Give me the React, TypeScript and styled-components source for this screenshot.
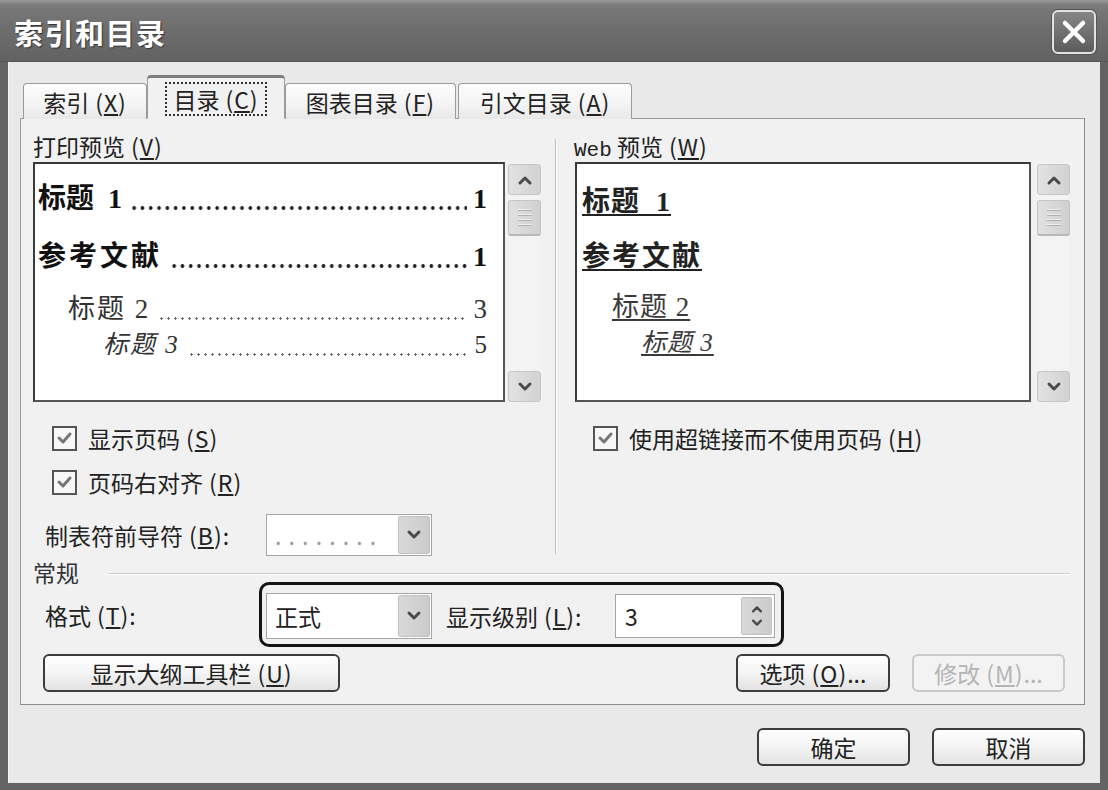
import React from 'react';
import styled, { createGlobalStyle } from 'styled-components';

const UI_FONT = `"Noto Sans CJK SC", "Noto Sans", sans-serif`;
const PREVIEW_FONT = `"Liberation Serif", "Noto Sans CJK SC", serif`;

const GlobalStyle = createGlobalStyle`
  html, body {
    margin: 0;
    padding: 0;
    background: #5f5f5f;
  }
  body {
    font-family: ${UI_FONT};
    color: #222;
  }
  * {
    box-sizing: border-box;
  }
`;

// accelerator key, shown as " (X)" with the letter underlined
const Key = ({ k }: { k: string }) => (
  <KeyWrap>
    (<u>{k}</u>)
  </KeyWrap>
);

const Chevron = ({ down = false, size = 18 }: { down?: boolean; size?: number }) => (
  <svg width={size} height={size} viewBox="0 0 18 18">
    <polyline
      points={down ? '4,6 9,11 14,6' : '4,12 9,7 14,12'}
      fill="none"
      stroke="#4a4a4a"
      strokeWidth={3}
      strokeLinecap="round"
      strokeLinejoin="round"
    />
  </svg>
);

const ScrollBar = () => (
  <Scroll>
    <ScrollButton>
      <Chevron />
    </ScrollButton>
    <Thumb>
      <Grip />
      <Grip />
      <Grip />
      <Grip />
    </Thumb>
    <ScrollTrack />
    <ScrollButton>
      <Chevron down />
    </ScrollButton>
  </Scroll>
);

const CheckBox = () => (
  <Box>
    <svg width="17" height="17" viewBox="0 0 17 17">
      <polyline
        points="3,8 7,12 14,4"
        fill="none"
        stroke="#777"
        strokeWidth={3}
        strokeLinecap="round"
        strokeLinejoin="round"
      />
    </svg>
  </Box>
);

const App: React.FC = () => {
  return (
    <>
      <GlobalStyle />
      <Window>
        <TitleBar>
          <Title>索引和目录</Title>
          <CloseButton>
            <svg width="26" height="26" viewBox="0 0 26 26">
              <path d="M4 4 L22 22 M22 4 L4 22" stroke="#fff" strokeWidth={4.5} strokeLinecap="round" />
            </svg>
          </CloseButton>
        </TitleBar>

        <Body>
          <TabRow>
            <Tab $width={124}>
              索引<Key k="X" />
            </Tab>
            <Tab $width={138} $active>
              <Focus>
                目录<Key k="C" />
              </Focus>
            </Tab>
            <Tab $width={171}>
              图表目录<Key k="F" />
            </Tab>
            <Tab $width={174}>
              引文目录<Key k="A" />
            </Tab>
          </TabRow>

          <Panel>
            <TopSection>
              <LeftCol>
                <SectionLabel>
                  打印预览<Key k="V" />
                </SectionLabel>
                <PreviewRow>
                  <PreviewBox>
                    <TocRow $height={42} $indent={0} $gap={0}>
                      <TocText $size={28} $bold>
                        标题  1
                      </TocText>
                      <Leader $bold $lift={10} />
                      <TocText $size={28} $bold>
                        1
                      </TocText>
                    </TocRow>
                    <TocRow $height={42} $indent={0} $gap={16}>
                      <TocText $size={28} $bold $spacing={3}>
                        参考文献
                      </TocText>
                      <Leader $bold $lift={10} />
                      <TocText $size={28} $bold>
                        1
                      </TocText>
                    </TocRow>
                    <TocRow $height={38} $indent={30} $gap={13}>
                      <TocText $size={27} $spacing={2}>
                        标题 2
                      </TocText>
                      <Leader $lift={9} />
                      <TocText $size={27}>3</TocText>
                    </TocRow>
                    <TocRow $height={30} $indent={65} $gap={4}>
                      <TocText $size={25} $italic $spacing={2}>
                        标题 3
                      </TocText>
                      <Leader $lift={7} />
                      <TocText $size={25}>5</TocText>
                    </TocRow>
                  </PreviewBox>
                  <ScrollBar />
                </PreviewRow>

                <CheckRow $top={22}>
                  <CheckBox />
                  <span>
                    显示页码<Key k="S" />
                  </span>
                </CheckRow>
                <CheckRow $top={16}>
                  <CheckBox />
                  <span>
                    页码右对齐<Key k="R" />
                  </span>
                </CheckRow>
                <LeaderRow>
                  <FieldLabel $width={221}>
                    制表符前导符<Key k="B" />:
                  </FieldLabel>
                  <Select $height={42}>
                    <SelectValue $muted>. . . . . . . .</SelectValue>
                    <DropButton>
                      <Chevron down />
                    </DropButton>
                  </Select>
                </LeaderRow>
              </LeftCol>

              <Separator />

              <RightCol>
                <SectionLabel>
                  <Mono>Web</Mono> 预览<Key k="W" />
                </SectionLabel>
                <PreviewRow $wide>
                  <PreviewBox>
                    <WebRow $height={42} $indent={2} $gap={0}>
                      <WebLink $size={28} $bold $spacing={1}>
                        标题  1
                      </WebLink>
                    </WebRow>
                    <WebRow $height={42} $indent={2} $gap={13}>
                      <WebLink $size={28} $bold $spacing={2}>
                        参考文献
                      </WebLink>
                    </WebRow>
                    <WebRow $height={36} $indent={32} $gap={11}>
                      <WebLink $size={27} $spacing={1}>
                        标题 2
                      </WebLink>
                    </WebRow>
                    <WebRow $height={30} $indent={61} $gap={3}>
                      <WebLink $size={25} $italic $spacing={1}>
                        标题 3
                      </WebLink>
                    </WebRow>
                  </PreviewBox>
                  <ScrollBar />
                </PreviewRow>

                <CheckRow $top={22}>
                  <CheckBox />
                  <span>
                    使用超链接而不使用页码<Key k="H" />
                  </span>
                </CheckRow>
              </RightCol>
            </TopSection>

            <GroupHeader>
              <span>常规</span>
              <GroupLine />
            </GroupHeader>

            <FormatRow>
              <FieldLabel $width={214}>
                格式<Key k="T" />:
              </FieldLabel>
              <Highlight>
                <Select $height={46}>
                  <SelectValue>正式</SelectValue>
                  <DropButton>
                    <Chevron down />
                  </DropButton>
                </Select>
                <LevelLabel>
                  显示级别<Key k="L" />:
                </LevelLabel>
                <Spin>
                  <SelectValue>3</SelectValue>
                  <SpinButtons>
                    <Chevron size={14} />
                    <Chevron size={14} down />
                  </SpinButtons>
                </Spin>
              </Highlight>
            </FormatRow>

            <ButtonRow>
              <Button $width={297}>
                显示大纲工具栏<Key k="U" />
              </Button>
              <RightButtons>
                <Button $width={154}>
                  选项<Key k="O" />...
                </Button>
                <Button $width={153} disabled>
                  修改<Key k="M" />...
                </Button>
              </RightButtons>
            </ButtonRow>
          </Panel>

          <DialogButtons>
            <Button $width={153}>确定</Button>
            <Button $width={153}>取消</Button>
          </DialogButtons>
        </Body>
      </Window>
    </>
  );
};

const Window = styled.div`
  width: 1108px;
  height: 790px;
  background: #636363;
  display: flex;
  flex-direction: column;
  overflow: hidden;
`;

const TitleBar = styled.div`
  height: 62px;
  flex-shrink: 0;
  display: flex;
  align-items: center;
  justify-content: space-between;
  padding: 2px 12px 0 14px;
  background: linear-gradient(180deg, #9a9a9a 0, #7a7a7a 5px, #6e6e6e 45%, #626262 100%);
  border-bottom: 1px solid #555;
`;

const Title = styled.div`
  font-family: ${UI_FONT};
  font-size: 29px;
  font-weight: 700;
  color: #fff;
  letter-spacing: 1.5px;
  text-shadow: 1px 1px 1px #333;
`;

const CloseButton = styled.div`
  width: 44px;
  height: 44px;
  border: 2px solid #e2e2e2;
  border-radius: 6px;
  background: linear-gradient(180deg, #868686, #5c5c5c);
  display: flex;
  align-items: center;
  justify-content: center;
  box-shadow: 0 0 0 1px #555;
`;

const Body = styled.div`
  flex: 1;
  margin: 0 8px 7px 8px;
  background: #e9e9e9;
  border-left: 1px solid #f5f5f5;
  padding: 14px 15px 16px 11px;
  display: flex;
  flex-direction: column;
`;

const KeyWrap = styled.span`
  margin-left: 6px;
  letter-spacing: 1px;

  u {
    text-underline-offset: 2px;
  }
`;

const Mono = styled.span`
  font-family: "Liberation Mono", monospace;
  font-size: 21px;
`;

const TabRow = styled.div`
  display: flex;
  align-items: flex-end;
  height: 43px;
  padding-left: 2px;
  margin-bottom: -1px;
  position: relative;
  z-index: 1;
`;

const Tab = styled.div<{ $width: number; $active?: boolean }>`
  width: ${({ $width }) => $width}px;
  height: ${({ $active }) => ($active ? 44 : 36)}px;
  margin: 0 ${({ $active }) => ($active ? '-1px' : '1px')};
  display: flex;
  align-items: center;
  justify-content: center;
  font-size: 23px;
  color: #222;
  white-space: nowrap;
  border: 1px solid #9b9b9b;
  border-top: ${({ $active }) => ($active ? '3px solid #7d7d7d' : '1px solid #9b9b9b')};
  border-bottom: ${({ $active }) => ($active ? '1px solid #f1f1f1' : 'none')};
  border-radius: 4px 4px 0 0;
  background: ${({ $active }) =>
    $active ? '#f1f1f1' : 'linear-gradient(180deg, #fdfdfd 0, #f3f3f3 60%, #e8e8e8 100%)'};
  padding-top: ${({ $active }) => ($active ? '2px' : '0')};
`;

const Focus = styled.span`
  border: 2px dotted #333;
  padding: 0 6px;
  line-height: 30px;
`;

const Panel = styled.div`
  height: 587px;
  background: #f1f1f1;
  border: 1px solid #9b9b9b;
  border-right-color: #8a8a8a;
  border-bottom-color: #8a8a8a;
  padding: 12px 14px 12px 12px;
  display: flex;
  flex-direction: column;
  font-size: 23px;
`;

const TopSection = styled.div`
  display: flex;
  height: 425px;
`;

const LeftCol = styled.div`
  width: 508px;
  display: flex;
  flex-direction: column;
`;

const RightCol = styled.div`
  flex: 1;
  margin-left: 17px;
  display: flex;
  flex-direction: column;
`;

const Separator = styled.div`
  width: 2px;
  margin: 8px 0 2px 14px;
  border-left: 1px solid #bcbcbc;
  border-right: 1px solid #fff;
`;

const SectionLabel = styled.div`
  height: 30px;
  line-height: 30px;
  font-size: 23px;
  color: #222;
  white-space: nowrap;
`;

const PreviewRow = styled.div<{ $wide?: boolean }>`
  margin-top: 1px;
  height: 240px;
  display: flex;
  gap: ${({ $wide }) => ($wide ? 6 : 3)}px;
  padding-left: ${({ $wide }) => ($wide ? 1 : 0)}px;
`;

const PreviewBox = styled.div`
  flex: 1;
  background: #fff;
  border: 2px solid #3a3a3a;
  border-right-color: #555;
  border-bottom-color: #555;
  padding: 14px 16px 0 3px;
  display: flex;
  flex-direction: column;
  overflow: hidden;
`;

const TocRow = styled.div<{ $height: number; $indent: number; $gap: number }>`
  display: flex;
  align-items: flex-end;
  height: ${({ $height }) => $height}px;
  margin-top: ${({ $gap }) => $gap}px;
  padding-left: ${({ $indent }) => $indent}px;
`;

const TocText = styled.span<{ $size: number; $bold?: boolean; $italic?: boolean; $spacing?: number }>`
  font-family: ${PREVIEW_FONT};
  font-size: ${({ $size }) => $size}px;
  font-weight: ${({ $bold }) => ($bold ? 700 : 400)};
  font-style: ${({ $italic }) => ($italic ? 'italic' : 'normal')};
  letter-spacing: ${({ $spacing = 0 }) => $spacing}px;
  color: ${({ $bold }) => ($bold ? '#111' : '#333')};
  white-space: pre;
  line-height: 1.5;
`;

const Leader = styled.span<{ $bold?: boolean; $lift: number }>`
  flex: 1;
  height: ${({ $bold }) => ($bold ? 4 : 3)}px;
  margin: 0 6px ${({ $lift }) => $lift}px 8px;
  background-image: radial-gradient(
    circle,
    ${({ $bold }) => ($bold ? '#222 1.6px, transparent 2.1px' : '#555 0.9px, transparent 1.4px')}
  );
  background-size: ${({ $bold }) => ($bold ? '8.3px 4px' : '7px 3px')};
  background-repeat: repeat-x;
`;

const WebRow = styled.div<{ $height: number; $indent: number; $gap: number }>`
  display: flex;
  align-items: center;
  height: ${({ $height }) => $height}px;
  margin-top: ${({ $gap }) => $gap}px;
  padding-left: ${({ $indent }) => $indent}px;
`;

const WebLink = styled.span<{ $size: number; $bold?: boolean; $italic?: boolean; $spacing?: number }>`
  font-family: ${PREVIEW_FONT};
  font-size: ${({ $size }) => $size}px;
  font-weight: ${({ $bold }) => ($bold ? 700 : 400)};
  font-style: ${({ $italic }) => ($italic ? 'italic' : 'normal')};
  letter-spacing: ${({ $spacing = 0 }) => $spacing}px;
  color: ${({ $bold }) => ($bold ? '#222' : '#3a3a3a')};
  text-decoration: underline;
  text-decoration-thickness: 2px;
  text-underline-offset: 3px;
  white-space: pre;
`;

const Scroll = styled.div`
  width: 33px;
  display: flex;
  flex-direction: column;
  padding-top: 2px;
  background: #f3f3f3;
`;

const ScrollButton = styled.div`
  height: 31px;
  display: flex;
  align-items: center;
  justify-content: center;
  background: linear-gradient(90deg, #e2e2e2, #d2d2d2);
  border: 1px solid #c6c6c6;
  border-radius: 3px;
`;

const Thumb = styled.div`
  height: 36px;
  margin-top: 5px;
  background: linear-gradient(90deg, #e0e0e0, #d0d0d0);
  border: 1px solid #c4c4c4;
  border-bottom: 2px solid #b8b8b8;
  border-radius: 3px;
  display: flex;
  flex-direction: column;
  align-items: center;
  justify-content: center;
  gap: 3px;
`;

const Grip = styled.div`
  width: 14px;
  height: 2px;
  background: #eee;
  border-bottom: 1px solid #b0b0b0;
`;

const ScrollTrack = styled.div`
  flex: 1;
`;

const CheckRow = styled.div<{ $top: number }>`
  display: flex;
  align-items: center;
  gap: 11px;
  height: 28px;
  margin-top: ${({ $top }) => $top}px;
  padding-left: 19px;
  font-size: 23px;
  color: #222;
  white-space: nowrap;
`;

const Box = styled.div`
  width: 25px;
  height: 25px;
  border: 2px solid #555;
  background: #f7f7f7;
  display: flex;
  align-items: center;
  justify-content: center;
`;

const LeaderRow = styled.div`
  display: flex;
  align-items: center;
  margin-top: 18px;
  padding-left: 12px;
`;

const FieldLabel = styled.div<{ $width: number }>`
  width: ${({ $width }) => $width}px;
  font-size: 23px;
  color: #222;
  white-space: nowrap;
`;

const Select = styled.div<{ $height: number }>`
  width: 166px;
  height: ${({ $height }) => $height}px;
  display: flex;
  align-items: stretch;
  background: #fff;
  border: 1px solid #a4a4a4;
  padding: 1px;
`;

const SelectValue = styled.div<{ $muted?: boolean }>`
  flex: 1;
  display: flex;
  align-items: center;
  padding-left: 7px;
  font-size: 23px;
  color: ${({ $muted }) => ($muted ? '#9a9a9a' : '#222')};
  letter-spacing: ${({ $muted }) => ($muted ? '1px' : '0')};
`;

const DropButton = styled.div`
  width: 32px;
  display: flex;
  align-items: center;
  justify-content: center;
  background: linear-gradient(90deg, #d9d9d9, #cbcbcb);
  border: 1px solid #c2c2c2;
  border-radius: 2px;
`;

const GroupHeader = styled.div`
  display: flex;
  align-items: center;
  height: 20px;
  margin-top: 6px;
  line-height: 20px;
  font-size: 23px;
  color: #333;
`;

const GroupLine = styled.div`
  flex: 1;
  height: 2px;
  margin: 4px 0 0 30px;
  border-top: 1px solid #cdcdcd;
  border-bottom: 1px solid #fff;
`;

const FormatRow = styled.div`
  display: flex;
  align-items: center;
  height: 65px;
  padding-left: 12px;
`;

const Highlight = styled.div`
  display: flex;
  align-items: center;
  height: 65px;
  border: 3px solid #151515;
  border-radius: 10px;
  padding: 3px 6px 0 4px;
`;

const LevelLabel = styled.div`
  width: 169px;
  margin-left: 14px;
  font-size: 23px;
  color: #222;
  white-space: nowrap;
`;

const Spin = styled.div`
  width: 160px;
  height: 44px;
  display: flex;
  background: #fff;
  border: 1px solid #a4a4a4;
  padding: 2px;
`;

const SpinButtons = styled.div`
  width: 31px;
  display: flex;
  flex-direction: column;
  align-items: center;
  justify-content: center;
  background: linear-gradient(90deg, #d9d9d9, #cbcbcb);
  border: 1px solid #c2c2c2;
  border-radius: 2px;
`;

const ButtonRow = styled.div`
  display: flex;
  align-items: center;
  height: 38px;
  margin-top: 7px;
  padding: 0 5px 0 10px;
`;

const RightButtons = styled.div`
  margin-left: auto;
  display: flex;
  gap: 22px;
`;

const Button = styled.button<{ $width: number }>`
  width: ${({ $width }) => $width}px;
  height: 38px;
  padding: 0;
  font-family: ${UI_FONT};
  font-size: 23px;
  color: #222;
  background: linear-gradient(180deg, #ffffff 0, #f4f4f4 50%, #e2e2e2 100%);
  border: 2px solid #3c3c3c;
  border-radius: 6px;
  white-space: nowrap;

  &:disabled {
    color: #b4b4b4;
    border-color: #c9c9c9;
    background: #f3f3f3;
  }
`;

const DialogButtons = styled.div`
  display: flex;
  justify-content: flex-end;
  gap: 22px;
  margin-top: 23px;
`;

export default App;
